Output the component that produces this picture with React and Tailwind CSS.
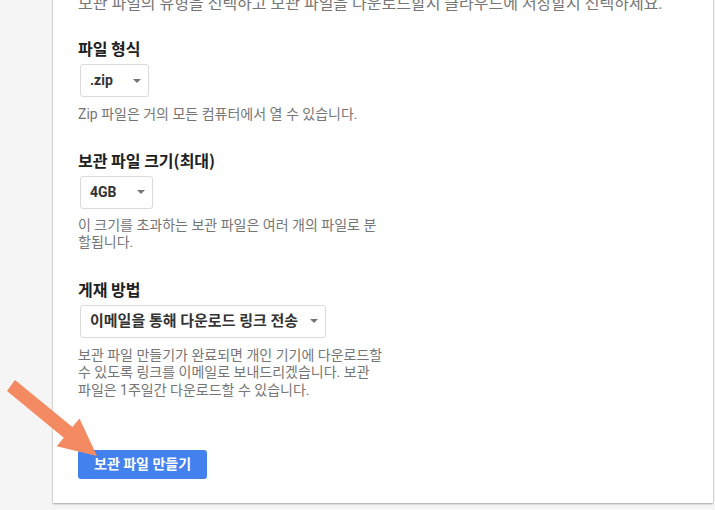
import React from "react";

const fuente = { fontFamily: '"Roboto", "Noto Sans CJK KR", sans-serif' };
const fuenteTitulo = { fontFamily: '"Noto Sans CJK KR", "Roboto", sans-serif' };

function Flecha() {
  return (
    <svg width="8" height="4" viewBox="0 0 8 4" className="shrink-0">
      <polygon points="0,0 8,0 4,4" fill="#757575" />
    </svg>
  );
}

function Selector({ valor, tam = "text-[14px]", hueco = "ml-[20px]" }) {
  return (
    <div className="ml-[2px] mt-[6px] flex">
      <div className="inline-flex h-[33px] items-center rounded-[3px] border border-[#dadada] bg-white pl-[9px] pr-[7px]">
        <span className={`${tam} font-bold text-[#333]`}>{valor}</span>
        <span className={hueco}>
          <Flecha />
        </span>
      </div>
    </div>
  );
}

function Ayuda({ lineas, className = "" }) {
  return (
    <div className={`text-[14px] leading-[17.5px] text-[#757575] ${className}`}>
      {lineas.map((l, i) => (
        <div key={i} className="whitespace-nowrap">{l}</div>
      ))}
    </div>
  );
}

function Titulo({ children }) {
  return (
    <h3 className="text-[16px] font-bold leading-[20px] text-[#202020]" style={fuenteTitulo}>
      {children}
    </h3>
  );
}

export default function App() {
  return (
    <div className="relative h-[510px] w-[715px] overflow-hidden bg-[#f5f5f5] pl-[53px] pr-[2px]" style={fuente}>
      <div className="-mt-[6px] bg-white px-[25px] pb-[24px] shadow-[0_1px_2px_rgba(0,0,0,0.3),0_0_1px_rgba(0,0,0,0.25)]">
        <p className="text-[16px] leading-[20px] text-[#757575] whitespace-nowrap">
          보관 파일의 유형을 선택하고 보관 파일을 다운로드할지 클라우드에 저장할지 선택하세요.
        </p>

        {/* Formato */}
        <div className="mt-[24px]">
          <Titulo>파일 형식</Titulo>
          <Selector valor=".zip" />
          <Ayuda className="mt-[9px]" lineas={["Zip 파일은 거의 모든 컴퓨터에서 열 수 있습니다."]} />
        </div>

        {/* Tamaño */}
        <div className="mt-[26px]">
          <Titulo>보관 파일 크기(최대)</Titulo>
          <Selector valor="4GB" />
          <Ayuda
            className="mt-[8px]"
            lineas={["이 크기를 초과하는 보관 파일은 여러 개의 파일로 분", "할됩니다."]}
          />
        </div>

        {/* Método */}
        <div className="mt-[27px]">
          <Titulo>게재 방법</Titulo>
          <Selector valor="이메일을 통해 다운로드 링크 전송" tam="text-[15px]" hueco="ml-[12px]" />
          <Ayuda
            className="mt-[9px]"
            lineas={[
              "보관 파일 만들기가 완료되면 개인 기기에 다운로드할",
              "수 있도록 링크를 이메일로 보내드리겠습니다. 보관",
              "파일은 1주일간 다운로드할 수 있습니다.",
            ]}
          />
        </div>

        <button className="mt-[51px] h-[29px] rounded-[3px] bg-[#4281ee] px-[16px] text-[14px] font-bold text-white">
          보관 파일 만들기
        </button>
      </div>

      {/* flecha naranja */}
      <svg className="pointer-events-none absolute left-0 top-0" width="120" height="480">
        <polygon
          points="15,380 72.4,427.1 79.5,418.5 97,456 56.7,446.3 63.8,437.7 7,391"
          fill="#f38a62"
        />
      </svg>
    </div>
  );
}
